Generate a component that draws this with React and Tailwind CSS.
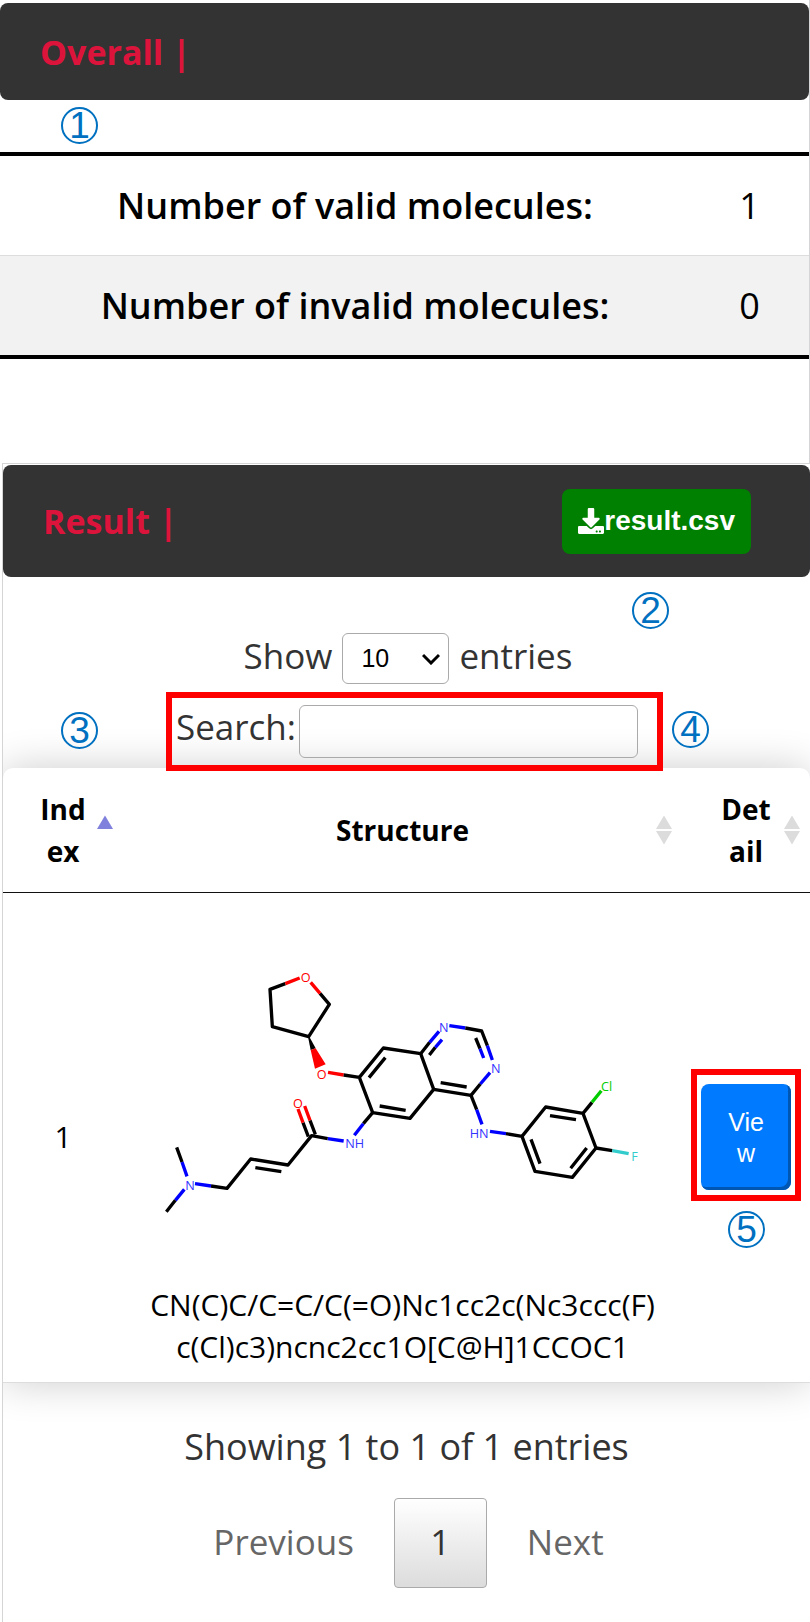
import React from "react";
import { FaDownload } from "react-icons/fa";

function Marker({ n, className }) {
  return (
    <span
      className={
        "absolute z-20 flex size-[37px] items-center justify-center rounded-full border-2 border-[#0070c0] font-['Liberation_Sans',sans-serif] text-[37px] leading-none text-[#0070c0] " +
        className
      }
    >
      {n}
    </span>
  );
}

function SortIcon({ active }) {
  return (
    <svg
      className="absolute top-1/2 right-[10px] h-[30px] w-4 -translate-y-1/2"
      viewBox="0 0 16 30"
      aria-hidden="true"
    >
      <path d="M8 0.500L16 14H0Z" fill={active ? "#8080dd" : "#dcdcdc"} />
      {!active && <path d="M8 29.500L16 16H0Z" fill="#dcdcdc" />}
    </svg>
  );
}

const bonds = [
  ["#000", "M406 101L360 118L367 230L476 260L538 163L510 130"],
  ["#f00", "M406 101L449 84M482 97L510 130"],
  ["#f00", "M534 367L581 375"],
  ["#000", "M581 375L628 382L700 294L812 311L851 418L780 505L668 488L628 382"],
  ["#000", "M657 383L706 323M689 468L767 481"],
  ["#000", "M668 488L640 521"],
  ["#00f", "M640 521L613 556"],
  ["#000", "M812 311L839 277M838 315L856 292"],
  ["#00f", "M839 277L867 244M856 292L876 269"],
  ["#00f", "M898 227L946 234"],
  ["#000", "M946 234L995 243L1012 287M977 264L990 296"],
  ["#00f", "M1012 287L1027 330M990 296L1001 324"],
  ["#00f", "M1020 368L991 402"],
  ["#000", "M991 402L963 436L851 418M872 398L950 411"],
  ["#000", "M963 436L980 479"],
  ["#00f", "M980 479L996 523"],
  ["#00f", "M1020 544L1068 551"],
  ["#000", "M1068 551L1116 559L1187 471L1299 490L1338 594L1267 682L1155 664L1116 559"],
  ["#000", "M1200 497L1278 509M1310 594L1262 655M1170 641L1143 568"],
  ["#000", "M1299 490L1326 457"],
  ["#0c0", "M1326 457L1354 422"],
  ["#000", "M1338 594L1387 602"],
  ["#3cc", "M1387 602L1436 611"],
  ["#00f", "M581 573L533 566"],
  ["#000", "M533 566L485 557L414 645L302 627L231 715L183 708M316 653L394 665"],
  ["#00f", "M183 708L135 701"],
  ["#000", "M475 560L459 518M496 553L480 511"],
  ["#f00", "M459 518L444 477M480 511L464 468"],
  ["#00f", "M111 679L96 636M103 718L76 751"],
  ["#000", "M96 636L80 592M76 751L49 785"],
];

const atoms = [
  [467, 97, "O", "#f00", "middle"],
  [515, 386, "O", "#f00", "middle"],
  [444, 474, "O", "#f00", "middle"],
  [586, 595, "NH", "#33f", "start"],
  [120, 720, "N", "#33f", "middle"],
  [881, 245, "N", "#33f", "middle"],
  [1037, 370, "N", "#33f", "middle"],
  [1016, 564, "HN", "#33f", "end"],
  [1353, 424, "Cl", "#0c0", "start"],
  [1444, 632, "F", "#3cc", "start"],
];

function Molecule() {
  return (
    <svg
      className="block h-auto w-full max-w-[520px]"
      viewBox="0 0 1560 840"
      role="img"
      aria-label="Molecular structure"
    >
      {bonds.map(([color, d], i) => (
        <path key={i} d={d} stroke={color} strokeWidth="10" fill="none" strokeLinejoin="round" />
      ))}
      <path d="M474 260L478 260L497 295L482 300Z" fill="#000" />
      <path d="M482 300L497 295L527 343L495 356Z" fill="#f00" />
      {atoms.map(([x, y, label, color, anchor], i) => (
        <text
          key={i}
          x={x}
          y={y}
          fill={color}
          textAnchor={anchor}
          className="font-['Open_Sans',sans-serif] text-[38px]"
        >
          {label}
        </text>
      ))}
    </svg>
  );
}

function Overall() {
  return (
    <section className="relative border-r border-[#d5d5d5] pt-[3px] pb-[104px]">
      <h2 className="flex h-[97px] items-center rounded-lg bg-[#333] px-10 pt-[2px] text-[34px] font-bold text-[#dc143c]">
        Overall |
      </h2>
      <Marker n="1" className="top-[107px] left-[61px]" />
      <table className="mt-[52px] w-full table-fixed border-collapse border-y-4 border-black text-center text-[36px] text-black">
        <colgroup>
          <col />
          <col className="w-[99px]" />
        </colgroup>
        <tbody>
          <tr className="h-[101px] border-b border-[#ddd]">
            <th scope="row" className="pt-[2px] font-semibold">Number of valid molecules:</th>
            <td className="pt-[2px] pr-5">1</td>
          </tr>
          <tr className="h-[102px] bg-[#f2f2f2]">
            <th scope="row" className="pt-[2px] font-semibold">Number of invalid molecules:</th>
            <td className="pt-[2px] pr-5">0</td>
          </tr>
        </tbody>
      </table>
    </section>
  );
}

function Result() {
  return (
    <section className="relative ml-[2px] overflow-hidden border-t border-l border-[#d5d5d5] pt-px">
      <div className="flex h-[112px] items-center justify-between rounded-lg bg-[#333] pr-[59px] pl-10">
        <h2 className="text-[34px] font-bold text-[#dc143c]">Result |</h2>
        <button
          type="button"
          className="flex h-[65px] items-center rounded-lg bg-[#008000] px-4 font-['Liberation_Sans',sans-serif] text-[28px] font-bold text-white"
        >
          <FaDownload className="size-[26px]" />
          result.csv
        </button>
      </div>
      <Marker n="2" className="top-[128px] right-[141px]" />

      <div className="mt-[56px] flex h-[51px] items-center justify-center gap-[10px] pl-[3px] text-[35px]">
        <label htmlFor="length" className="pb-1">Show</label>
        <span className="relative">
          <select
            id="length"
            defaultValue="10"
            className="block h-[51px] w-[107px] appearance-none rounded-md border border-[#aaa] bg-white pl-[18px] font-['Liberation_Sans',sans-serif] text-[25px] text-black"
          >
            <option>10</option>
            <option>25</option>
            <option>50</option>
            <option>100</option>
          </select>
          <svg
            className="pointer-events-none absolute top-1/2 right-[9px] h-3 w-[18px] -translate-y-1/2"
            viewBox="0 0 18 12"
            fill="none"
            stroke="#000"
            strokeWidth="3"
            aria-hidden="true"
          >
            <path d="M1 2L9 10L17 2" />
          </svg>
        </span>
        <span className="pb-1">entries</span>
      </div>

      <div className="mt-2 flex justify-center pl-4">
        <div className="relative flex h-[79px] w-[497px] items-center gap-[3px] pr-[25px] pl-[10px] text-[35px]">
          <label htmlFor="search" className="pb-2">Search:</label>
          <input
            id="search"
            type="search"
            className="h-[53px] min-w-0 flex-1 rounded-md border border-[#aaa] bg-transparent px-2"
          />
          <span className="pointer-events-none absolute inset-0 z-20 border-6 border-[#f00]" />
          <Marker n="4" className="top-[19px] -right-[46px]" />
        </div>
      </div>
      <Marker n="3" className="top-[248px] left-[58px]" />

      <div className="-mt-[3px] rounded-t-[10px] bg-white shadow-[0_0_40px_rgba(0,0,0,0.2)]">
        <table className="w-full table-fixed border-collapse border-b border-[#ddd] text-center text-black">
          <colgroup>
            <col className="w-[120px]" />
            <col />
            <col className="w-[128px]" />
          </colgroup>
          <thead>
            <tr className="h-[124px] border-b border-[#111] text-[28px] leading-[42px]">
              <th scope="col" className="relative px-8 font-bold break-all">
                Index
                <SortIcon active />
              </th>
              <th scope="col" className="relative font-bold">
                Structure
                <SortIcon />
              </th>
              <th scope="col" className="relative px-9 font-bold break-all">
                Detail
                <SortIcon />
              </th>
            </tr>
          </thead>
          <tbody>
            <tr className="text-[30px] leading-[42px]">
              <td>1</td>
              <td className="pt-[57px] pb-[14px] break-all">
                <div className="flex justify-center pl-[14px]">
                  <Molecule />
                </div>
                <p className="mt-[54px] px-[22px]">
                  CN(C)C/C=C/C(=O)Nc1cc2c(Nc3ccc(F)c(Cl)c3)ncnc2cc1O[C@H]1CCOC1
                </p>
              </td>
              <td>
                <span className="relative inline-block p-[10px] align-middle">
                  <button
                    type="button"
                    className="block h-[106px] w-[90px] rounded-lg bg-[#007bff] px-5 pt-[2px] font-['Liberation_Sans',sans-serif] text-[25px] leading-[31px] break-all text-white shadow-[inset_-3px_-3px_0_#0056b3]"
                  >
                    View
                  </button>
                  <span className="pointer-events-none absolute inset-x-0 -top-[5px] -bottom-px z-20 border-6 border-[#f00]" />
                  <Marker n="5" className="top-[137px] left-[37px]" />
                </span>
              </td>
            </tr>
          </tbody>
        </table>
      </div>

      <p className="mt-10 text-center text-[36px] leading-[48px]">Showing 1 to 1 of 1 entries</p>
      <nav className="mt-[27px] flex items-center justify-center pb-[34px] pl-1 text-[35px]" aria-label="Pages">
        <button type="button" className="px-[40px] text-[#666]">Previous</button>
        <button
          type="button"
          className="h-[90px] w-[93px] rounded-[4px] border border-[#aaa] bg-linear-to-b from-white to-[#dcdcdc]"
        >
          1
        </button>
        <button type="button" className="px-[40px] text-[#666]">Next</button>
      </nav>
    </section>
  );
}

export default function App() {
  return (
    <main className="bg-white font-['Open_Sans','Noto_Sans',sans-serif] text-[#333]">
      <Overall />
      <Result />
    </main>
  );
}
